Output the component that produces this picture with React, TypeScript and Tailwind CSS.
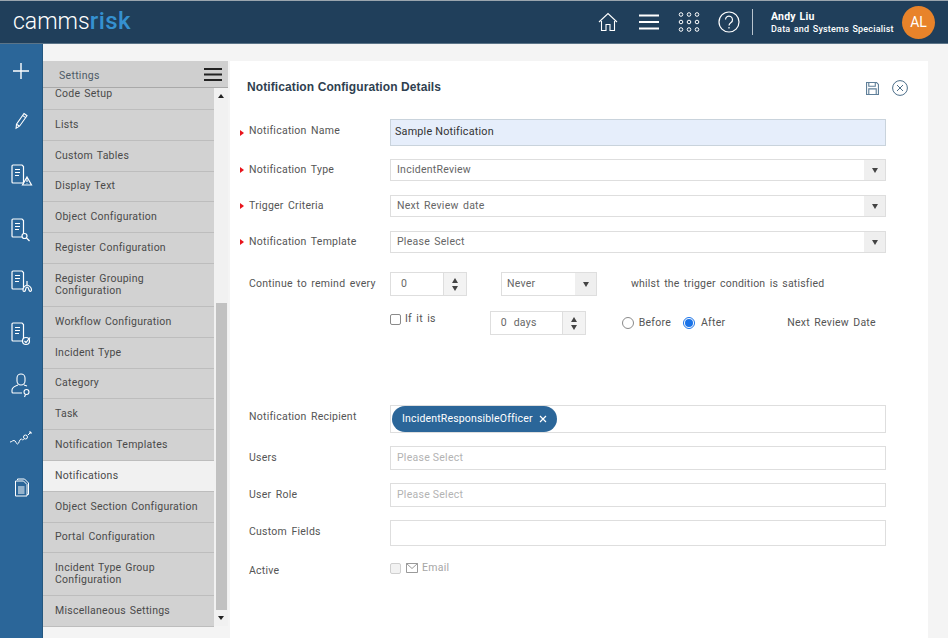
import { ReactNode } from "react";

const menu = [
  "Code Setup", "Lists", "Custom Tables", "Display Text", "Object Configuration",
  "Register Configuration", "Register Grouping Configuration", "Workflow Configuration",
  "Incident Type", "Category", "Task", "Notification Templates", "Notifications",
  "Object Section Configuration", "Portal Configuration", "Incident Type Group Configuration",
  "Miscellaneous Settings",
];
const twoLine = ["Register Grouping Configuration", "Incident Type Group Configuration"];

function Doc({ children }: { children?: ReactNode }) {
  return (
    <svg width="24" height="26" viewBox="0 0 24 26" fill="none" stroke="#fff" strokeWidth="1.2">
      <path d="M4 3h9l1.500 1.500V20a1 1 0 0 1-1 1H4a1 1 0 0 1-1-1V4a1 1 0 0 1 1-1z" />
      <path d="M6 7.500h5M6 10.500h5M6 13.500h4" />
      {children}
    </svg>
  );
}

function SideIcons() {
  return (
    <div className="flex flex-col items-center">
      <svg className="mt-[19px]" width="16" height="16" viewBox="0 0 16 16" stroke="#fff" strokeWidth="1.4"><path d="M8 0v16M0 8h16" /></svg>
      <svg className="mt-[33px]" width="16" height="18" viewBox="0 0 16 18" fill="none" stroke="#fff" strokeWidth="1.1">
        <path d="M11 1.500l3 2.200-7.500 10.500-3.400 2 .4-3.900zM9.600 3.400l3 2.200M3.600 12.300l3 2" />
      </svg>
      <div className="mt-[32px] h-[26px]"><Doc><path d="M18 15l4.500 8h-9zM18 17.500v2.500M18 21v.5" fill="#2b6699" /></Doc></div>
      <div className="mt-[28px] h-[26px]"><Doc><circle cx="15.500" cy="20" r="2.500" fill="#2b6699" /><path d="M17.500 22l3 3" /></Doc></div>
      <div className="mt-[26px] h-[26px]"><Doc><path d="M18 13v4c-3 1-4 3-4 5s2 2 2.500 0c.4-2 1-3 1.500-3s1.500 1 2 3c.5 2 2.500 1.500 2.500 0 0-2-1.500-4-4.500-5" fill="#2b6699" /></Doc></div>
      <div className="mt-[26px] h-[26px]"><Doc><circle cx="17" cy="21" r="3.500" fill="#2b6699" /><path d="M15.500 21l1.500 1.500 4-5" /></Doc></div>
      <svg className="mt-[26px]" width="22" height="26" viewBox="0 0 22 26" fill="none" stroke="#fff" strokeWidth="1.1">
        <path d="M7 6a4 4 0 0 1 8 0v3a4 4 0 0 1-8 0zM8 13c-3 1-6 2-6 5v2a1 1 0 0 0 1 1h9M14 13l3 1" />
        <circle cx="16.500" cy="20" r="2.500" /><path d="M15.500 22.500l-1 2.500" />
      </svg>
      <svg className="mt-[33px]" width="22" height="14" viewBox="0 0 22 14" fill="none" stroke="#fff" strokeWidth="1">
        <path d="M0 11c2 0 2-1.500 4-1.500 2 0 2 3.500 3.500 3.500S9.500 8 11 8s1.500 2 3 0" />
        <circle cx="15.500" cy="6" r="2" /><path d="M18 4l3-3M19 1h2v2" />
      </svg>
      <svg className="mt-[33px] ml-[2px]" width="16" height="19" viewBox="0 0 16 19" fill="none" stroke="#fff" strokeWidth="1">
        <path d="M3.500 2V1h7l4 4v11.500h-2" />
        <path d="M1.500 3h8l3.500 3.500V18h-11.500z" fill="#2b6699" />
        <path d="M4 9h6.500M4 11h6.500M4 13h6.500M4 15h6.500" />
      </svg>
    </div>
  );
}

function Header() {
  return (
    <div className="h-[44px] shrink-0 bg-[#203f5b] border-t border-t-[#9aa5ae] border-b border-b-[#5b7488] flex items-center text-white">
      <div className="ml-[13px] mb-[2px] text-[23px] leading-none font-light flex items-baseline">
        camms<span className="text-[#3591d0] text-[24px] font-medium tracking-[0.5px]">risk</span>
      </div>
      <div className="ml-auto flex items-center">
        <svg width="20" height="20" viewBox="0 0 20 20" fill="none" stroke="#fff" strokeWidth="1.1" className="mr-[21px]">
          <path d="M1 10l9-8.500 9 8.500M3.500 9v9.500h4.500v-6h4v6h4.500V9" />
        </svg>
        <svg width="20" height="16" viewBox="0 0 20 16" stroke="#fff" strokeWidth="2" className="mr-[19px]"><path d="M0 1.500h20M0 8h20M0 14.500h20" /></svg>
        <svg width="22" height="20" viewBox="0 0 22 20" fill="none" stroke="#fff" strokeWidth="1" className="mr-[18px]">
          <circle cx="3" cy="2.500" r="1.800" /><circle cx="11" cy="2.500" r="1.800" /><circle cx="19" cy="2.500" r="1.800" />
          <circle cx="3" cy="10" r="1.800" /><circle cx="11" cy="10" r="1.800" /><circle cx="19" cy="10" r="1.800" />
          <circle cx="3" cy="17.500" r="1.800" /><circle cx="11" cy="17.500" r="1.800" /><circle cx="19" cy="17.500" r="1.800" />
        </svg>
        <svg width="22" height="22" viewBox="0 0 22 22" fill="none" stroke="#fff" strokeWidth="1.200" className="mr-[12px]">
          <circle cx="11" cy="11" r="10" /><path d="M7.500 8.500a3.500 3.500 0 1 1 5.500 3c-1.500 1-2 1.500-2 3" /><path d="M11 16v1.500" />
        </svg>
        <div className="w-px h-[26px] bg-[#b8c4ce] mr-[18px]" />
        <div className="w-[131px] text-[9px] leading-[12px] tracking-[0.2px] [word-spacing:1px]">
          <div className="text-[10.500px] font-bold leading-[13px]">Andy Liu</div>
          <div className="font-medium">Data and Systems Specialist</div>
        </div>
        <div className="w-[33px] h-[33px] rounded-full bg-[#e8832a] mr-[13px] flex items-center justify-center text-[14px]">AL</div>
      </div>
    </div>
  );
}

function SettingsMenu() {
  return (
    <div className="w-[185px] shrink-0 mt-[17px] h-[565px] flex flex-col bg-[#f1f1f1]">
      <div className="h-[27px] shrink-0 bg-[#cfcfcf] border-b border-b-[#a9a9a9] flex items-center justify-between pl-[16px] pr-[6px] text-[10.500px] tracking-[0.3px] text-[#4d5a66]">
        <span className="mt-[4px]">Settings</span>
        <svg width="18" height="15" viewBox="0 0 18 15" stroke="#222" strokeWidth="2.200"><path d="M0 2h18M0 7.500h18M0 13h18" /></svg>
      </div>
      <div className="flex-1 flex min-h-0">
        <div className="w-[171px]">
          {menu.map((m, i) => (
            <div
              key={m}
              className={`flex items-center pl-[12px] pr-[12px] border-b border-b-[#bdbdbd] text-[10.500px] leading-[12px] tracking-[0.25px] [word-spacing:1px] text-[#4a4a4a] ${
                twoLine.includes(m) ? "h-[43px] pr-[24px]" : i === 0 ? "h-[22px] pb-[10px]" : "h-[30.800px]"
              } ${m === "Notifications" ? "bg-[#f1f1f1]" : "bg-[#d2d2d2]"}`}
            >
              {m}
            </div>
          ))}
        </div>
        <div className="w-[14px] flex flex-col items-center">
          <div className="mt-[6px] w-0 h-0 border-x-[3px] border-x-transparent border-b-[4px] border-b-[#222]" />
          <div className="w-[11px] h-[307px] mt-[205px] bg-[#c1c1c1]" />
          <div className="mt-[6px] w-0 h-0 border-x-[3px] border-x-transparent border-t-[4px] border-t-[#222]" />
        </div>
      </div>
    </div>
  );
}

function Label({ children, req }: { children: ReactNode; req?: boolean }) {
  return (
    <div className="w-[150px] shrink-0 flex items-center text-[10.500px] tracking-[0.25px] [word-spacing:1.500px] text-[#555]">
      <span className="w-[9px] shrink-0">
        {req && <span className="block w-0 h-0 border-y-[3.500px] border-y-transparent border-l-[4px] border-l-[#e8141c]" />}
      </span>
      {children}
    </div>
  );
}

function Caret() {
  return <span className="w-0 h-0 border-x-[3.500px] border-x-transparent border-t-[5px] border-t-[#444]" />;
}

function Select({ value, small }: { value: string; small?: boolean }) {
  return (
    <div className={`border border-[#dedede] flex items-center text-[10.500px] tracking-[0.25px] [word-spacing:1.500px] text-[#666] ${small ? "w-[96px] h-[24px] ml-[34px]" : "w-[496px] h-[22px]"}`}>
      <span className={`flex-1 ${small ? "pl-[5px]" : "pl-[6px]"}`}>{value}</span>
      <span className="w-[21px] h-full bg-[#efefef] flex items-center justify-center">
        <Caret />
      </span>
    </div>
  );
}

function Spinner({ value, cls }: { value: string; cls: string }) {
  return (
    <div className={`h-[24px] border border-[#dedede] flex items-center text-[10.500px] tracking-[0.25px] text-[#666] ${cls}`}>
      <span className="flex-1 pl-[10px] [word-spacing:4px]">{value}</span>
      <span className="w-[23px] h-full border-l border-l-[#dedede] bg-[#f3f3f3] flex flex-col items-center justify-center gap-[3px]">
        <span className="w-0 h-0 border-x-[3.500px] border-x-transparent border-b-[5px] border-b-[#444]" />
        <Caret />
      </span>
    </div>
  );
}

function Field({ h, children }: { h: string; children?: ReactNode }) {
  return <div className={`w-[496px] border border-[#dedede] flex items-center text-[10.500px] tracking-[0.25px] ${h}`}>{children}</div>;
}

function Form() {
  return (
    <div className="w-[698px] shrink-0 ml-[2px] mt-[17px] bg-white pl-[10px]">
      <div className="flex items-center justify-between h-[54px] pr-[20px]">
        <div className="ml-[7px] mb-[2px] text-[12px] font-bold tracking-[0.1px] text-[#2f3f50] font-['Liberation_Sans',sans-serif]">Notification Configuration Details</div>
        <div className="flex items-center gap-[13px]">
          <svg width="13" height="13" viewBox="0 0 14 14" fill="none" stroke="#5f7f99" strokeWidth="1.200">
            <path d="M.6.6h10.800l2 2v10.800H.6zM3 .6v4h7v-4M3 13.400v-6h8v6" />
          </svg>
          <svg width="16" height="16" viewBox="0 0 16 16" fill="none" stroke="#4d6f8a" strokeWidth="1">
            <circle cx="8" cy="8" r="7.400" /><path d="M5 5l6 6M11 5l-6 6" />
          </svg>
        </div>
      </div>

      <div className="flex mt-[4px]">
        <Label req><span className="mb-[3px] flex">Notification Name</span></Label>
        <div className="w-[496px] h-[27px] border border-[#c9d3dc] bg-[#e6eefb] flex items-center pl-[4px] text-[10.800px] tracking-[0.2px] text-[#333]">Sample Notification</div>
      </div>
      <div className="flex mt-[13px]"><Label req>Notification Type</Label><Select value="IncidentReview" /></div>
      <div className="flex mt-[14px]"><Label req>Trigger Criteria</Label><Select value="Next Review date" /></div>
      <div className="flex mt-[14px]"><Label req>Notification Template</Label><Select value="Please Select" /></div>

      <div className="flex items-center mt-[19px] h-[24px]">
        <Label>Continue to remind every</Label>
        <Spinner value="0" cls="w-[77px]" />
        <Select value="Never" small />
        <span className="ml-[34px] mb-[1px] text-[10.500px] tracking-[0.2px] [word-spacing:1.500px] text-[#555]">whilst the trigger condition is satisfied</span>
      </div>
      <div className="flex items-center mt-[15px] h-[24px] text-[10.500px] tracking-[0.25px] text-[#555]">
        <div className="w-[150px] shrink-0" />
        <span className="w-[11px] h-[11px] mb-[8px] rounded-[2px] border border-[#8a8a8a]" />
        <span className="ml-[4px] mb-[9px] [word-spacing:1.500px]">If it is</span>
        <Spinner value="0 days" cls="w-[96px] ml-[54px]" />
        <span className="ml-[36px] w-[12px] h-[12px] rounded-full border border-[#8a8a8a]" />
        <span className="ml-[5px]">Before</span>
        <span className="ml-[12px] w-[12px] h-[12px] rounded-full border border-[#1a73e8] flex items-center justify-center">
          <span className="w-[8px] h-[8px] rounded-full bg-[#1a73e8]" />
        </span>
        <span className="ml-[6px]">After</span>
        <span className="ml-[62px] [word-spacing:1.500px]">Next Review Date</span>
      </div>

      <div className="flex mt-[70px]">
        <Label><span className="mb-[5px] flex">Notification Recipient</span></Label>
        <Field h="h-[28px]">
          <span className="ml-[1px] h-[26px] px-[10px] rounded-full bg-[#2b6699] text-white flex items-center gap-[6px] tracking-[0.17px]">
            IncidentResponsibleOfficer
            <svg width="8" height="8" viewBox="0 0 8 8" stroke="#fff" strokeWidth="1.200"><path d="M1 1l6 6M7 1l-6 6" /></svg>
          </span>
        </Field>
      </div>
      <div className="flex mt-[13px]">
        <Label>Users</Label>
        <Field h="h-[24px]"><span className="pl-[6px] text-[#b3b3b3]">Please Select</span></Field>
      </div>
      <div className="flex mt-[13px]">
        <Label>User Role</Label>
        <Field h="h-[24px]"><span className="pl-[6px] text-[#b3b3b3]">Please Select</span></Field>
      </div>
      <div className="flex mt-[13px]">
        <Label><span className="mb-[2px] flex">Custom Fields</span></Label>
        <Field h="h-[26px]" />
      </div>
      <div className="flex items-center mt-[14px] h-[16px] text-[10.500px] tracking-[0.25px] text-[#a6a6a6]">
        <Label><span className="mt-[6px] flex">Active</span></Label>
        <span className="w-[11px] h-[11px] rounded-[2px] border border-[#cfcfcf] bg-[#f2f2f2]" />
        <svg className="ml-[5px]" width="12" height="10" viewBox="0 0 12 10" fill="none" stroke="#8f8f8f" strokeWidth="0.900"><path d="M.5.5h11v9H.5zM.5.5L6 5.500 11.500.5" /></svg>
        <span className="ml-[4px]">Email</span>
      </div>
    </div>
  );
}

export default function App() {
  return (
    <div className="w-[948px] h-[638px] overflow-hidden flex flex-col bg-[#f4f4f4] font-['Roboto',sans-serif]">
      <Header />
      <div className="flex-1 flex min-h-0">
        <div className="w-[43px] shrink-0 bg-[#2b6699] border-r border-r-[#24577f]"><SideIcons /></div>
        <SettingsMenu />
        <Form />
      </div>
    </div>
  );
}
